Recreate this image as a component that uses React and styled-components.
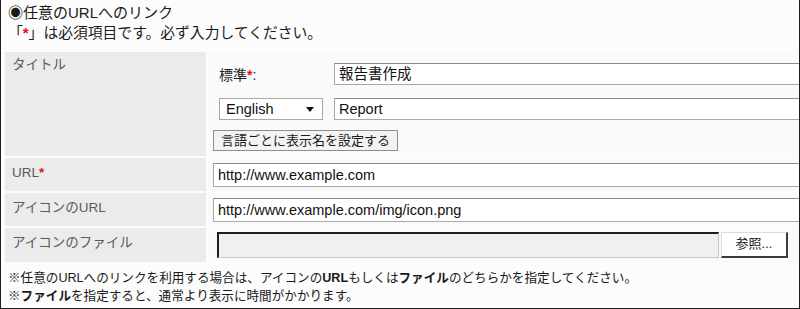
import React from 'react'
import styled, { createGlobalStyle } from 'styled-components'

const GlobalStyle = createGlobalStyle`
  html, body {
    margin: 0;
    padding: 0;
    background: #ffffff;
  }
  body {
    font-family: "Liberation Sans", "Noto Sans CJK JP", sans-serif;
    color: #1a1a1a;
  }
`

const Frame = styled.div`
  box-sizing: border-box;
  width: 800px;
  height: 309px;
  overflow: hidden;
  background: #fcfcfc;
  border: 1px solid #1e1e1e;
  border-top: none;
  padding: 3px 0 0 4px;
`

const Heading = styled.div`
  font-size: 15px;
  line-height: 20px;
  padding-left: 3px;
`

const Notice = styled.div`
  font-size: 14.8px;
  line-height: 21px;
  padding-left: 3px;
`

const Req = styled.span`
  color: #e41111;
  font-weight: bold;
`

const Form = styled.div`
  display: grid;
  grid-template-columns: 201px 1fr;
  grid-template-rows: 104px 33px 33px 34px;
  gap: 2px;
  margin-top: 8px;
`

const Label = styled.div`
  background: #ebebeb;
  color: #5a5a5a;
  font-size: 13.5px;
  line-height: 18px;
  padding: ${p => (p.$top ? '4px' : '6px')} 0 0 7px;
`

const Cell = styled.div`
  background: #fafafa;
  overflow: hidden;
  display: flex;
  flex-direction: column;
  justify-content: ${p => (p.$top ? 'flex-start' : 'center')};
  padding: ${p => (p.$top ? '11px 0 0 5px' : '0 0 0 5px')};
  gap: ${p => (p.$top ? '13px' : '0')};
`

const LangRow = styled.div`
  display: grid;
  grid-template-columns: 115px 1fr;
  align-items: center;
  padding-left: 6px;
  height: 22px;
`

const FieldName = styled.span`
  font-size: 14px;
  color: #222;
`

const TextInput = styled.div`
  box-sizing: border-box;
  height: ${p => p.$h || 22}px;
  width: calc(100% + 30px);
  background: #ffffff;
  border: 1px solid #a8a8a8;
  border-top-color: #8c8c8c;
  font-size: 14.5px;
  line-height: ${p => (p.$h || 22) - 2}px;
  padding-left: 4px;
  color: #111;
  white-space: nowrap;
`

const Select = styled.div`
  box-sizing: border-box;
  width: 104px;
  height: 22px;
  background: #ffffff;
  border: 1px solid #a8a8a8;
  display: flex;
  align-items: center;
  justify-content: space-between;
  padding: 0 8px 0 6px;
  font-size: 14.5px;
  color: #111;
`

const Arrow = styled.span`
  width: 0;
  height: 0;
  border-left: 4.5px solid transparent;
  border-right: 4.5px solid transparent;
  border-top: 5px solid #111;
`

const Button = styled.div`
  box-sizing: border-box;
  align-self: flex-start;
  height: 21px;
  margin-top: -3px;
  padding: 0 7px;
  background: #f3f3f3;
  border: 1px solid #8e8e8e;
  font-size: 13px;
  line-height: 19px;
  color: #1a1a1a;
`

const FileRow = styled.div`
  display: flex;
  align-items: stretch;
  height: 26px;
  padding-left: 4px;
`

const FileBox = styled.div`
  box-sizing: border-box;
  width: 502px;
  background: #f0f0f0;
  border: 1px solid #c8c8c8;
  border-top: 2px solid #1e1e1e;
  border-left: 2px solid #1e1e1e;
`

const BrowseButton = styled.div`
  box-sizing: border-box;
  width: 67px;
  margin-left: 2px;
  background: #ffffff;
  border: 1px solid #dcdcdc;
  border-right: 2px solid #3a3a3a;
  border-bottom: 2px solid #3a3a3a;
  font-size: 13px;
  line-height: 22px;
  text-align: center;
  color: #1a1a1a;
`

const Notes = styled.div`
  font-size: 12.6px;
  line-height: 18px;
  margin-top: 7px;
  padding-left: 3px;
  color: #1a1a1a;
`

export default function App () {
  return (
    <>
      <GlobalStyle />
      <Frame>
        <Heading>◉任意のURLへのリンク</Heading>
        <Notice>「<Req>*</Req>」は必須項目です。必ず入力してください。</Notice>
        <Form>
          <Label $top>タイトル</Label>
          <Cell $top>
            <LangRow>
              <FieldName>標準<Req>*</Req>:</FieldName>
              <TextInput>報告書作成</TextInput>
            </LangRow>
            <LangRow>
              <Select>English<Arrow /></Select>
              <TextInput>Report</TextInput>
            </LangRow>
            <Button>言語ごとに表示名を設定する</Button>
          </Cell>

          <Label>URL<Req>*</Req></Label>
          <Cell>
            <TextInput $h={24}>http://www.example.com</TextInput>
          </Cell>

          <Label>アイコンのURL</Label>
          <Cell>
            <TextInput $h={24}>http://www.example.com/img/icon.png</TextInput>
          </Cell>

          <Label>アイコンのファイル</Label>
          <Cell>
            <FileRow>
              <FileBox />
              <BrowseButton>参照...</BrowseButton>
            </FileRow>
          </Cell>
        </Form>
        <Notes>
          <div>※任意のURLへのリンクを利用する場合は、アイコンの<b>URL</b>もしくは<b>ファイル</b>のどちらかを指定してください。</div>
          <div>※<b>ファイル</b>を指定すると、通常より表示に時間がかかります。</div>
        </Notes>
      </Frame>
    </>
  )
}
